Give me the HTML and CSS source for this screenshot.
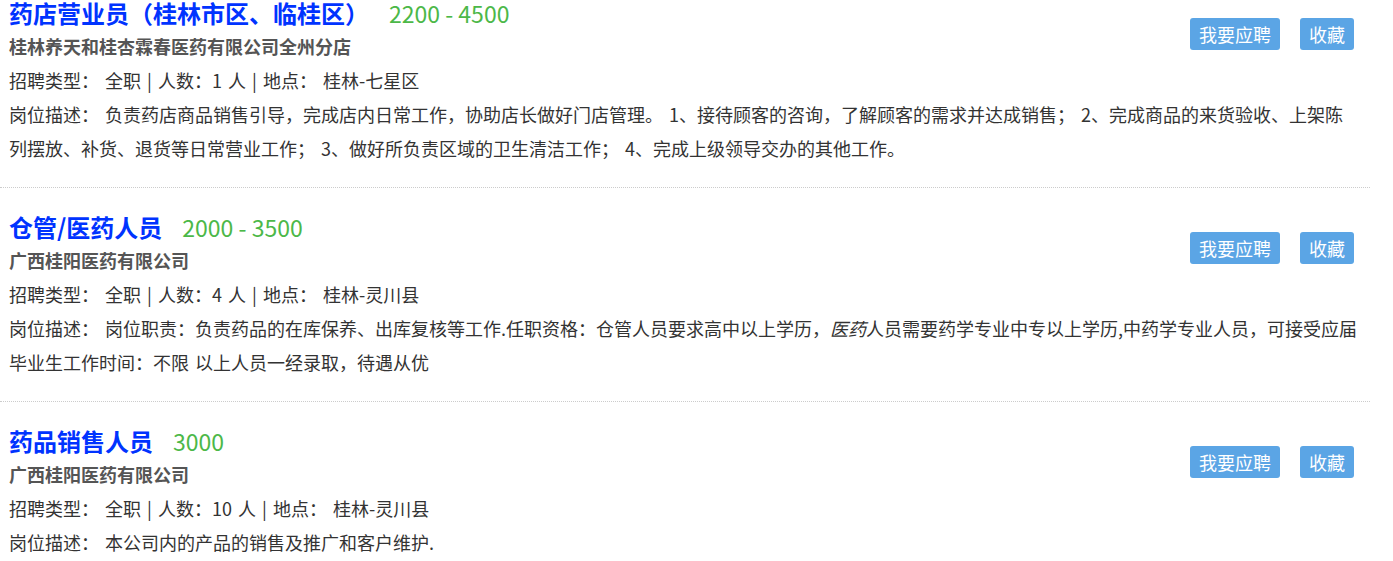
FILE: index.html
```html
<!DOCTYPE html>
<html lang="zh-CN">
<head>
    <meta charset="UTF-8">
    <meta name="viewport" content="width=device-width, initial-scale=1.0">
    <title>招聘信息</title>
    <link rel="stylesheet" href="styles.css">
</head>
<body>

<div class="job-list">
    <div class="job">
        <div class="job-head">
            <div class="job-title">
                <a href="#" class="name">药店营业员（桂林市区、临桂区）</a>
                <span class="salary">2200 - 4500</span>
            </div>
            <div class="company">桂林养天和桂杏霖春医药有限公司全州分店</div>
            <div class="info">招聘类型： 全职 | 人数：1 人 | 地点： 桂林-七星区</div>
        </div>
        <div class="actions">
            <button class="btn">我要应聘</button>
            <button class="btn">收藏</button>
        </div>
        <div class="desc">岗位描述： 负责药店商品销售引导，完成店内日常工作，协助店长做好门店管理。 1、接待顾客的咨询，了解顾客的需求并达成销售； 2、完成商品的来货验收、上架陈列摆放、补货、退货等日常营业工作； 3、做好所负责区域的卫生清洁工作； 4、完成上级领导交办的其他工作。</div>
    </div>

    <div class="job">
        <div class="job-head">
            <div class="job-title">
                <a href="#" class="name">仓管/医药人员</a>
                <span class="salary">2000 - 3500</span>
            </div>
            <div class="company">广西桂阳医药有限公司</div>
            <div class="info">招聘类型： 全职 | 人数：4 人 | 地点： 桂林-灵川县</div>
        </div>
        <div class="actions">
            <button class="btn">我要应聘</button>
            <button class="btn">收藏</button>
        </div>
        <div class="desc">岗位描述： 岗位职责：负责药品的在库保养、出库复核等工作.任职资格：仓管人员要求高中以上学历，<em>医药</em>人员需要药学专业中专以上学历,中药学专业人员，可接受应届毕业生工作时间：不限 以上人员一经录取，待遇从优</div>
    </div>

    <div class="job">
        <div class="job-head">
            <div class="job-title">
                <a href="#" class="name">药品销售人员</a>
                <span class="salary">3000</span>
            </div>
            <div class="company">广西桂阳医药有限公司</div>
            <div class="info">招聘类型： 全职 | 人数：10 人 | 地点： 桂林-灵川县</div>
        </div>
        <div class="actions">
            <button class="btn">我要应聘</button>
            <button class="btn">收藏</button>
        </div>
        <div class="desc">岗位描述： 本公司内的产品的销售及推广和客户维护.</div>
    </div>
</div>

</body>
</html>
```

FILE: styles.css
```css
body {
    font-family: "Noto Sans CJK SC", "Noto Sans", sans-serif;
    font-size: 18px;
    color: #333;
    background-color: #fff;
    margin: 0;
    word-spacing: 2px;
}
.job-list {
    width: 1370px;
}
.job {
    display: grid;
    grid-template-columns: 1fr auto;
    padding: 26px 11px 22px 9px;
    border-bottom: 1px dotted #ccc;
}
.job:first-child {
    padding-top: 0;
}
.job-title {
    display: flex;
    align-items: baseline;
    line-height: 26px;
    margin-bottom: 4px;
    word-spacing: 0;
}
.name {
    font-size: 24px;
    font-weight: bold;
    color: #0033ff;
    text-decoration: none;
}
.salary {
    font-size: 23px;
    color: #4cb848;
    margin-left: 20px;
}
.company {
    font-weight: bold;
    color: #555;
    line-height: 33px;
}
.info {
    line-height: 34px;
}
.actions {
    display: flex;
    gap: 20px;
    align-items: flex-start;
    padding-top: 18px;
    margin-right: 5px;
}
.btn {
    font-family: inherit;
    font-size: 18px;
    line-height: 32px;
    padding: 0 9px;
    color: white;
    background-color: #5ba5e5;
    border: none;
    border-radius: 3px;
    cursor: pointer;
}
.desc {
    grid-column: 1 / 3;
    line-height: 34px;
}
.desc em {
    font-style: italic;
}
```
